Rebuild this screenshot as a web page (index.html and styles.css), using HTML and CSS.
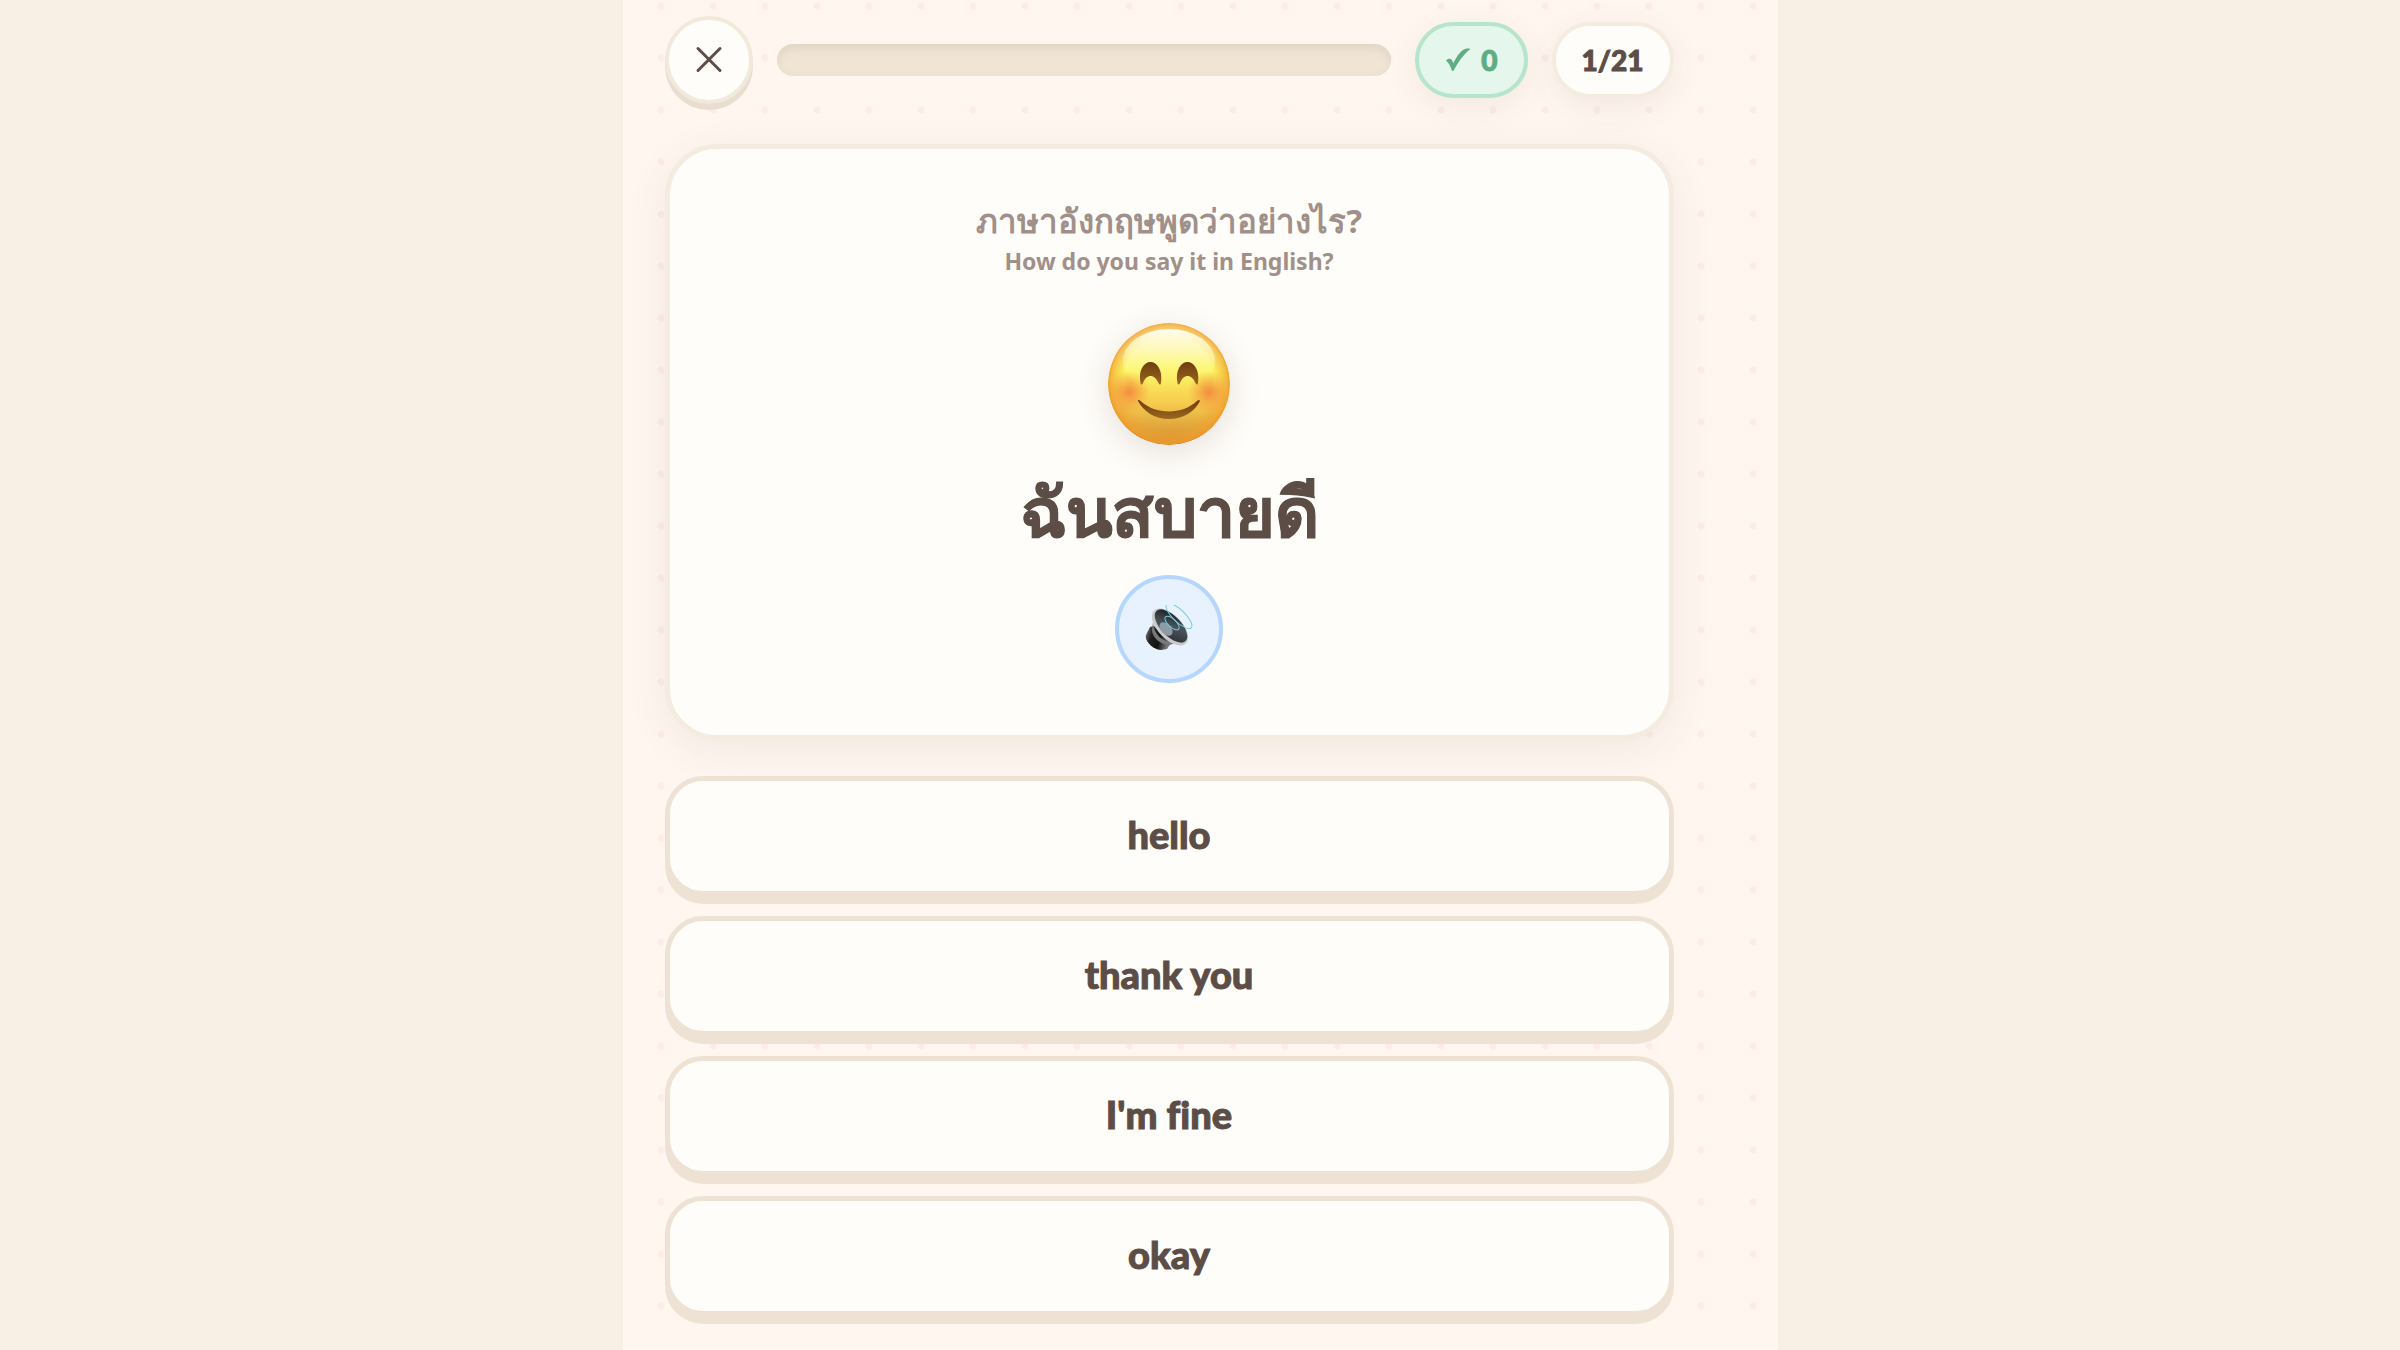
FILE: index.html
```html
<!DOCTYPE html>
<html lang="th">
<head>
    <meta charset="UTF-8">
    <meta name="viewport" content="width=device-width, initial-scale=1.0">
    <title>Quiz</title>
    <link rel="stylesheet" href="styles.css">
</head>
<body>
    <main class="shell">
        <header class="topbar">
            <button class="close-button" type="button" aria-label="Close">
                <svg viewBox="0 0 28 28" aria-hidden="true"><path d="M3 2.500 25 24.500M25 2.500 3 24.500"/></svg>
            </button>
            <div class="progress" role="progressbar" aria-label="Progress" aria-valuemin="0" aria-valuemax="21" aria-valuenow="0"></div>
            <div class="pill pill-score">
                <svg viewBox="0 0 26 24" aria-hidden="true"><path d="M1 12.500C2.500 11 4.500 10.300 6 11.300 7.200 12.100 7.800 13.500 8.300 15.200 12 8 16.500 1.500 21 .8 22.500.5 24 .6 25.500.9 19.500 5 12.500 15 8.500 22.800 7.600 23.300 7 23 6.700 22 5.300 18 3.900 14.800 1 12.500Z"/></svg>
                <span>0</span>
            </div>
            <div class="pill">1/21</div>
        </header>

        <section class="card">
            <p class="prompt">ภาษาอังกฤษพูดว่าอย่างไร?</p>
            <p class="prompt-sub" lang="en">How do you say it in English?</p>
            <svg class="face" viewBox="0 0 122 122" aria-hidden="true">
                <defs>
                    <linearGradient id="skin" x1="0" y1="0" x2="0" y2="1">
                        <stop offset="0" stop-color="#fbe9a0"/>
                        <stop offset=".2" stop-color="#fcf3a0"/>
                        <stop offset=".38" stop-color="#fbf45f"/>
                        <stop offset=".65" stop-color="#f7cc50"/>
                        <stop offset="1" stop-color="#d08a2c"/>
                    </linearGradient>
                    <radialGradient id="rim" cx=".5" cy=".49" r=".52">
                        <stop offset=".72" stop-color="#f3a52d" stop-opacity="0"/>
                        <stop offset=".9" stop-color="#f0a030" stop-opacity=".6"/>
                        <stop offset=".96" stop-color="#ee9a2a" stop-opacity=".9"/>
                        <stop offset="1" stop-color="#cf732a"/>
                    </radialGradient>
                    <linearGradient id="shine" x1="0" y1="0" x2="0" y2="1">
                        <stop offset="0" stop-color="#fffdf0"/>
                        <stop offset="1" stop-color="#fff96b" stop-opacity="0"/>
                    </linearGradient>
                    <radialGradient id="blush">
                        <stop offset="0" stop-color="#f27f38" stop-opacity=".85"/>
                        <stop offset="1" stop-color="#f2903c" stop-opacity="0"/>
                    </radialGradient>
                    <linearGradient id="feature" x1="0" y1="0" x2="0" y2="1">
                        <stop offset="0" stop-color="#6e3c0d"/>
                        <stop offset="1" stop-color="#9a671f"/>
                    </linearGradient>
                </defs>
                <circle cx="61" cy="61" r="61" fill="url(#skin)"/>
                <circle cx="61" cy="61" r="61" fill="url(#rim)"/>
                <ellipse cx="61" cy="38" rx="46" ry="32" fill="url(#shine)"/>
                <circle cx="21" cy="69" r="21" fill="url(#blush)"/>
                <circle cx="101" cy="69" r="21" fill="url(#blush)"/>
                <path fill="url(#feature)" d="M32.500 60C30 47 36 39 42.500 39S55 47 53 60C52.500 62 51.500 62 50.500 60 46.500 50.500 38.500 50.500 35 60 34 62 33 62 32.500 60ZM69.500 60C67 47 73 39 79.500 39S92 47 90 60C89.500 62 88.500 62 87.500 60 83.500 50.500 75.500 50.500 72 60 71 62 70 62 69.500 60Z"/>
                <path fill="url(#feature)" d="M30 78C29.500 76.500 31.500 76.500 32.500 78 48 92 74 92 89 78 90.500 76.500 92.500 76.500 91.500 79 86 89 75 96 61 96S36 89 30 78Z"/>
            </svg>
            <h1 class="word">ฉันสบายดี</h1>
            <button class="audio-button" type="button" aria-label="Play audio">
                <svg viewBox="0 0 48 48" aria-hidden="true">
                    <defs>
                        <linearGradient id="magnet" x1="0" y1="0" x2="1" y2=".3">
                            <stop offset="0" stop-color="#8b8b8b"/>
                            <stop offset=".3" stop-color="#222"/>
                            <stop offset=".65" stop-color="#111"/>
                            <stop offset="1" stop-color="#777"/>
                        </linearGradient>
                        <linearGradient id="cone" x1="0" y1="0" x2="1" y2="1">
                            <stop offset="0" stop-color="#111"/>
                            <stop offset=".5" stop-color="#4b535b"/>
                            <stop offset="1" stop-color="#25292d"/>
                        </linearGradient>
                    </defs>
                    <path fill="url(#magnet)" d="M5 22 1 30C-1 36 9 45 16 45L22 44 26 38 9 21Z"/>
                    <path fill="#77797b" d="M8 17C9 30 17 37 30 38L25 40C15 40 7 32 7 25Z"/>
                    <ellipse cx="25" cy="22" rx="23" ry="12" transform="rotate(46 25 22)" fill="#c9cacb"/>
                    <ellipse cx="26" cy="21" rx="21" ry="10" transform="rotate(46 26 21)" fill="url(#cone)"/>
                    <ellipse cx="21" cy="24" rx="8" ry="5" transform="rotate(46 21 24)" fill="#8e9ba6"/>
                    <g fill="none" stroke="#72cadb" stroke-width="1">
                        <ellipse cx="27" cy="18" rx="9" ry="4" transform="rotate(43 27 18)"/>
                        <ellipse cx="34" cy="11" rx="17" ry="6" transform="rotate(44 34 11)"/>
                    </g>
                </svg>
            </button>
        </section>

        <div class="options" lang="en">
            <button class="option" type="button">hello</button>
            <button class="option" type="button">thank you</button>
            <button class="option" type="button">I'm fine</button>
            <button class="option" type="button">okay</button>
        </div>
    </main>
</body>
</html>
```
FILE: styles.css
```css
* {
    box-sizing: border-box;
}
body {
    margin: 0;
    font-family: "Noto Sans", sans-serif;
    background-color: #f8f0e4;
    color: #5c4d47;
}
button {
    font-family: inherit;
    color: inherit;
    cursor: pointer;
}
p, h1 {
    margin: 0;
}
.shell {
    max-width: 1155px;
    min-height: 100vh;
    margin: 0 auto;
    padding: 16px 104px 26px 42px;
    background-color: #fff6ef;
    background-image: radial-gradient(circle, #fcebe6 3px, transparent 4px);
    background-size: 52px 52px;
    background-position: 12px 32px;
}
.topbar {
    display: flex;
    align-items: center;
    gap: 24px;
    margin-bottom: 40px;
}
.close-button {
    display: flex;
    align-items: center;
    justify-content: center;
    width: 88px;
    height: 88px;
    padding: 0;
    background-color: #fffdf9;
    border: 4px solid #f1e9dc;
    border-radius: 50%;
    box-shadow: 0 6px 0 #e8ddd1;
}
.close-button svg {
    width: 28px;
    height: 28px;
    fill: none;
    stroke: #5c4d47;
    stroke-width: 3;
    stroke-linecap: round;
}
.progress {
    flex: 1;
    height: 32px;
    background-color: #f0e4d4;
    border-radius: 16px;
    box-shadow: inset 0 4px 8px rgba(92, 77, 71, 0.1);
}
.pill {
    display: flex;
    align-items: center;
    justify-content: center;
    gap: 10px;
    height: 76px;
    padding: 0 26px;
    background-color: #fffdf9;
    border: 4px solid #f4ece0;
    border-radius: 38px;
    box-shadow: 0 8px 32px rgba(92, 77, 71, 0.08);
    font-family: Lato, sans-serif;
    font-size: 28px;
    font-weight: 900;
    -webkit-text-stroke: 1px;
}
.pill-score {
    background-color: #e5f6ec;
    border-color: #b5e5cb;
    color: #5fad84;
}
.pill-score svg {
    width: 26px;
    height: 24px;
    fill: #5fad84;
}
.card {
    display: flex;
    flex-direction: column;
    align-items: center;
    padding: 46px 40px 52px;
    background-color: #fffdf9;
    border: 5px solid #f4ece0;
    border-radius: 52px;
    box-shadow: 0 10px 40px rgba(92, 77, 71, 0.08);
    text-align: center;
}
.prompt {
    color: #a1908a;
    font-size: 33px;
    line-height: 52px;
    font-weight: 700;
}
.prompt-sub {
    color: #a1908a;
    font-size: 23px;
    line-height: 28px;
    font-weight: 700;
}
.face {
    width: 122px;
    height: 122px;
    margin-top: 48px;
    border-radius: 50%;
    box-shadow: 0 8px 32px rgba(92, 77, 71, 0.16);
}
.word {
    margin: 16px 0 14px;
    font-size: 68px;
    line-height: 100px;
    font-weight: 700;
    -webkit-text-stroke: 1px;
}
.audio-button {
    display: flex;
    align-items: center;
    justify-content: center;
    width: 108px;
    height: 108px;
    padding: 0;
    background-color: #e8f2fe;
    border: 4px solid #b5d7fd;
    border-radius: 50%;
}
.audio-button svg {
    width: 48px;
    height: 48px;
}
.options {
    display: flex;
    flex-direction: column;
    gap: 20px;
    margin-top: 36px;
}
.option {
    height: 120px;
    padding: 0 24px 4px;
    background-color: #fffdf9;
    border: 5px solid #eee2d4;
    border-radius: 38px;
    box-shadow: 0 8px 0 #eee2d4;
    font-family: Lato, sans-serif;
    font-size: 38px;
    font-weight: 900;
    font-variant-ligatures: none;
    -webkit-text-stroke: 1px;
}
```
